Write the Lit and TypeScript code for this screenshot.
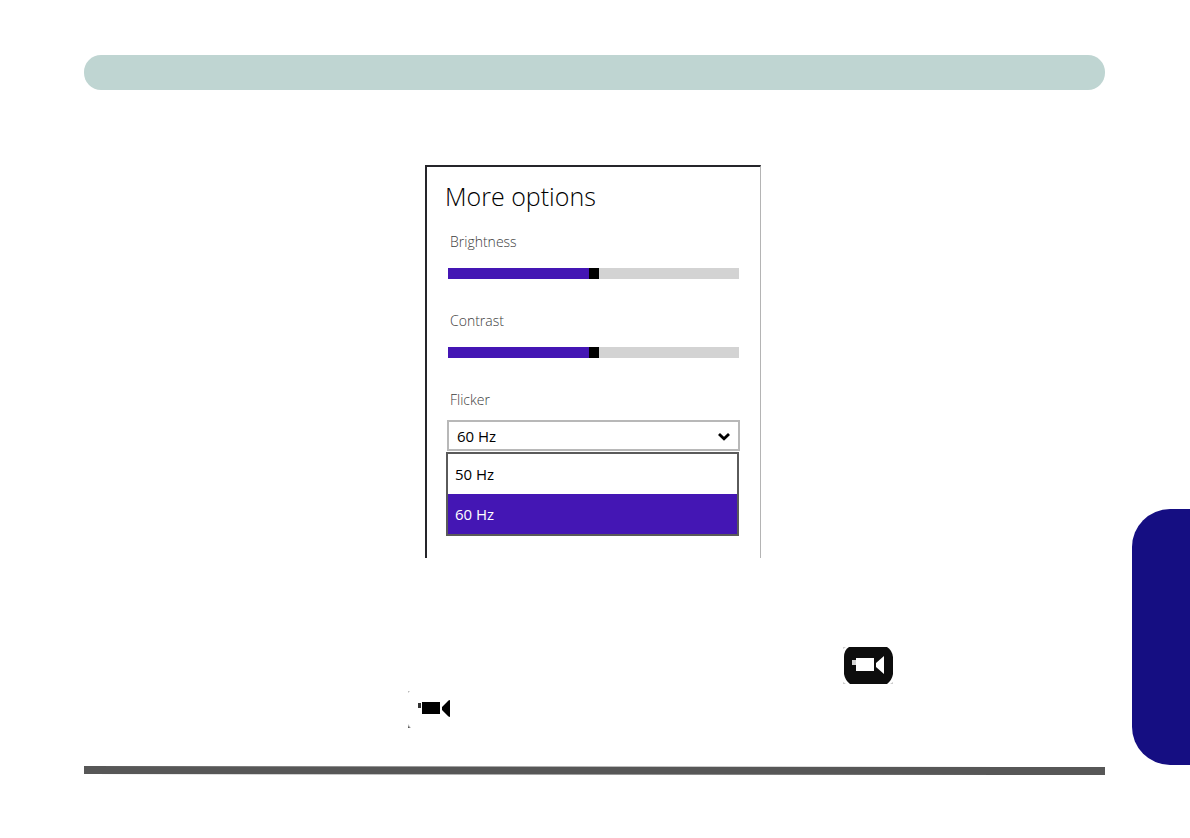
import { LitElement, html, css } from "lit";
import { customElement, property, state } from "lit/decorators.js";
import { classMap } from "lit/directives/class-map.js";
import { styleMap } from "lit/directives/style-map.js";

@customElement("option-slider")
class OptionSlider extends LitElement {
  @property() label = "";
  @property({ type: Number }) value = 50;

  static styles = css`
    :host {
      display: block;
      height: 79px;
    }
    .label {
      display: block;
      padding-left: 2px;
      font-size: 14px;
      line-height: 20px;
      color: #3c3c3c;
    }
    .range {
      appearance: none;
      display: block;
      width: 100%;
      height: 11px;
      margin: 16px 0 0;
      background: #d3d3d3;
    }
    .range::-webkit-slider-thumb {
      appearance: none;
      width: 10px;
      height: 11px;
      background: #000;
    }
  `;

  render() {
    const fill = `linear-gradient(to right, #4416b4 ${this.value}%, #d3d3d3 ${this.value}%)`;
    return html`
      <label class="label" for="range">${this.label}</label>
      <input
        id="range"
        class="range"
        type="range"
        min="0"
        max="100"
        .value=${String(this.value)}
        style=${styleMap({ background: fill })}
        @input=${(e: Event) => (this.value = Number((e.target as HTMLInputElement).value))}
      />
    `;
  }
}

@customElement("camera-icon")
class CameraIcon extends LitElement {
  @property({ type: Boolean }) inverse = false;

  static styles = css`
    :host {
      display: block;
      width: 50px;
      height: 38px;
    }
    .icon {
      display: block;
    }
  `;

  render() {
    return this.inverse
      ? html`<svg class="icon" width="50" height="38" viewBox="0 0 50 38" role="img" aria-label="Video mode">
          <path fill="#ccc" d="M0 35l3 2H0zM50 35l-3 2h3zM0 0h3L0 2z" />
          <path fill="#0d0d0d" d="M6 0H44Q49 3 50 10V27Q49 33 44 37H7Q2 33 1 27V10Q1 3 6 0Z" />
          <path fill="#d4d4d4" d="M9 13h4v5H9z" />
          <path fill="#fff" d="M13 11h18v13H13zM33 16l8-7v18l-8-7z" />
        </svg>`
      : html`<svg class="icon" width="50" height="38" viewBox="0 0 50 38" role="img" aria-label="Camera mode">
          <path fill="#bbb" d="M0 1h2L0 3zM0 34l3 4H0z" />
          <path fill="#555" d="M0 36l2 2H0z" />
          <path fill="#333" d="M10 13h3v5h-3z" />
          <path fill="#000" d="M14 12h18v12H14zM34 17l6-6q2-2 2 0v15q0 2-2 0l-6-6z" />
        </svg>`;
  }
}

@customElement("app-root")
class AppRoot extends LitElement {
  @state() private flicker = "60 Hz";
  private rates = ["50 Hz", "60 Hz"];

  static styles = css`
    :host {
      display: block;
      box-sizing: border-box;
      min-height: 100vh;
      padding: 55px 0 0 84px;
      background: #fff;
      font-family: "Open Sans", "Noto Sans", sans-serif;
      font-weight: 300;
    }
    .page {
      display: grid;
      grid-template-columns: minmax(0, 1fr) 58px;
      column-gap: 27px;
    }
    .banner {
      height: 35px;
      border-radius: 17px;
      background: #bfd5d2;
    }
    .figure {
      display: flex;
      justify-content: center;
      margin-top: 75px;
      padding-right: 3px;
    }
    .panel {
      box-sizing: border-box;
      width: 336px;
      padding: 11px 21px 22px 21px;
      border: solid #25252a;
      border-width: 2px 1px 0 2px;
      border-right-color: #b4b4b4;
    }
    .title {
      margin: 0 0 18px -3px;
      font-size: 25px;
      font-weight: 300;
      line-height: 36px;
      color: #000;
    }
    .label {
      display: block;
      padding-left: 2px;
      font-size: 14px;
      line-height: 20px;
      color: #3c3c3c;
    }
    .drop {
      display: grid;
      margin: 10px -1px 0;
    }
    .select,
    .chevron {
      grid-area: 1 / 1;
    }
    .select {
      appearance: none;
      box-sizing: border-box;
      width: 100%;
      height: 31px;
      padding: 0 8px;
      border: 2px solid #b8b8b8;
      border-radius: 0;
      background: #fff;
      font: 400 15px/20px "Open Sans", "Noto Sans", sans-serif;
      color: #000;
    }
    .chevron {
      place-self: center end;
      margin-right: 10px;
      pointer-events: none;
    }
    .list {
      margin: 1px 0 0 -2px;
      padding: 0;
      border: 2px solid #5a5a5a;
      list-style: none;
    }
    .option {
      display: block;
      width: 100%;
      height: 40px;
      padding: 0 7px 1px;
      border: 0;
      background: #fff;
      font: 400 15px/20px "Open Sans", "Noto Sans", sans-serif;
      text-align: left;
      color: #000;
    }
    .chosen {
      background: #4416b4;
      color: #fff;
    }
    .line {
      display: flex;
    }
    .video {
      justify-content: flex-end;
      margin: 89px 212px 0 0;
    }
    .photo {
      margin: 5px 0 0 324px;
    }
    .rule {
      display: block;
      width: 100%;
      height: 9px;
      margin-top: 38px;
    }
    .tab {
      align-self: end;
      height: 256px;
      margin-bottom: 10px;
      border-radius: 38px 0 0 38px;
      background: #150e82;
    }
  `;

  render() {
    return html`
      <div class="page">
        <main>
          <div class="banner"></div>
          <div class="figure">
            <section class="panel">
              <h1 class="title">More options</h1>
              <option-slider label="Brightness" .value=${50}></option-slider>
              <option-slider label="Contrast" .value=${50}></option-slider>
              <label class="label" for="flicker">Flicker</label>
              <div class="drop">
                <select
                  id="flicker"
                  class="select"
                  @change=${(e: Event) => (this.flicker = (e.target as HTMLSelectElement).value)}
                >
                  ${this.rates.map((r) => html`<option ?selected=${r === this.flicker}>${r}</option>`)}
                </select>
                <svg class="chevron" width="12" height="11" viewBox="0 0 12 11" aria-hidden="true">
                  <path d="M1 4L6 8.8L11 4" fill="none" stroke="#000" stroke-width="2.8" />
                </svg>
              </div>
              <ul class="list">
                ${this.rates.map(
                  (r) => html`<li>
                    <button
                      type="button"
                      class=${classMap({ option: true, chosen: r === this.flicker })}
                      @click=${() => (this.flicker = r)}
                    >${r}</button>
                  </li>`
                )}
              </ul>
            </section>
          </div>
          <div class="line video"><camera-icon inverse></camera-icon></div>
          <div class="line photo"><camera-icon></camera-icon></div>
          <svg class="rule" viewBox="0 0 1021 9" preserveAspectRatio="none" aria-hidden="true">
            <path d="M0 0L1021 1V9L0 8Z" fill="#575757" />
          </svg>
        </main>
        <aside class="tab"></aside>
      </div>
    `;
  }
}
